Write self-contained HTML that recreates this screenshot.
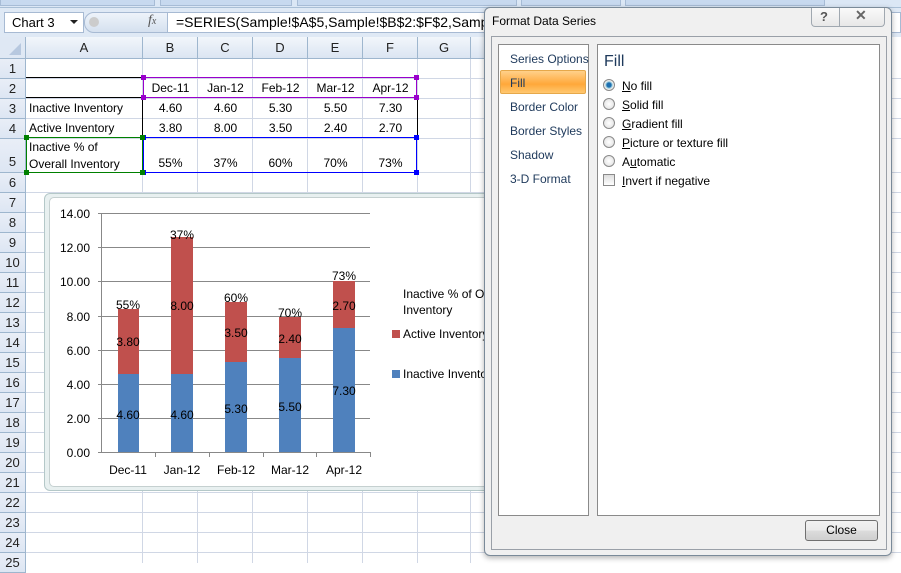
<!DOCTYPE html><html><head><style>
*{margin:0;padding:0;box-sizing:border-box}
body{width:901px;height:563px;overflow:hidden;position:relative;background:#fff;font-family:"Liberation Sans",sans-serif;font-size:12px;color:#000}
.a{position:absolute}
.hl{position:absolute;left:0;width:901px;height:1px;background:#d0d7e5}
.vl{position:absolute;top:37px;width:1px;height:526px;background:#d0d7e5}
.rh{position:absolute;left:0;width:26px;background:linear-gradient(#e9eef7,#dde6f3);border-bottom:1px solid #9eb6ce;border-right:1px solid #9eb6ce;text-align:center;font-size:13px;color:#222}
.ch{position:absolute;top:37px;height:22px;background:linear-gradient(#f2f6fb,#dbe5f2);border-right:1px solid #9eb6ce;border-bottom:1px solid #9eb6ce;text-align:center;line-height:21px;font-size:13px;color:#222}
.c{position:absolute;font-size:12px;text-align:center}
.li{position:absolute;left:12px;font-size:12px;color:#1e395b}
.opt{position:absolute;left:7px;font-size:12px;color:#000}
.rad{position:absolute;left:7px;width:12px;height:12px;border-radius:50%;border:1px solid #8a8a8a;background:radial-gradient(#fff,#ddd)}
</style></head><body>
<!-- ribbon remnant -->
<div class="a" style="left:0;top:0;width:901px;height:8px;background:#dbe7f5;border-bottom:1px solid #a9bfd6"></div>
<div class="a" style="left:0;top:0;width:155px;height:6px;background:#c7d9ef;border:1px solid #a7bcd6;border-top:0"></div>
<div class="a" style="left:160px;top:0;width:132px;height:6px;background:#c7d9ef;border:1px solid #a7bcd6;border-top:0"></div>
<div class="a" style="left:297px;top:0;width:220px;height:6px;background:#c7d9ef;border:1px solid #a7bcd6;border-top:0"></div>
<div class="a" style="left:521px;top:0;width:100px;height:6px;background:#c7d9ef;border:1px solid #a7bcd6;border-top:0"></div>
<div class="a" style="left:625px;top:0;width:200px;height:6px;background:#c7d9ef;border:1px solid #a7bcd6;border-top:0"></div>
<!-- formula bar -->
<div class="a" style="left:0;top:8px;width:901px;height:29px;background:#dfe9f5"></div>
<div class="a" style="left:4px;top:12px;width:80px;height:21px;background:#fff;border:1px solid #a7bad3;font-size:13px;line-height:19px;padding-left:7px">Chart 3</div>
<div class="a" style="left:70px;top:20px;border:4px solid transparent;border-top:4px solid #222"></div>
<div class="a" style="left:84px;top:12px;width:84px;height:21px;background:linear-gradient(#eef3fa,#d5e1ef);border:1px solid #a7bad3;border-radius:10px 0 0 10px"></div>
<div class="a" style="left:89px;top:17px;width:10px;height:10px;border-radius:50%;background:#ccc"></div>
<div class="a" style="left:148px;top:13px;font-family:'Liberation Serif',serif;font-style:italic;font-size:14px;color:#555">f<span style="font-size:10px">x</span></div>
<div class="a" style="left:167px;top:12px;width:734px;height:21px;background:#fff;border:1px solid #a7bad3;font-size:14px;line-height:19px;padding-left:8px;white-space:nowrap">=SERIES(Sample!$A$5,Sample!$B$2:$F$2,Sample!$B$5:$F$5,3)</div>
<!-- grid -->
<div class="hl" style="top:78px"></div><div class="hl" style="top:98px"></div><div class="hl" style="top:118px"></div><div class="hl" style="top:138px"></div><div class="hl" style="top:172px"></div>
<div class="hl" style="top:192px"></div><div class="hl" style="top:212px"></div><div class="hl" style="top:232px"></div><div class="hl" style="top:252px"></div><div class="hl" style="top:272px"></div><div class="hl" style="top:292px"></div><div class="hl" style="top:312px"></div><div class="hl" style="top:332px"></div><div class="hl" style="top:352px"></div><div class="hl" style="top:372px"></div><div class="hl" style="top:392px"></div><div class="hl" style="top:412px"></div><div class="hl" style="top:432px"></div><div class="hl" style="top:452px"></div><div class="hl" style="top:472px"></div><div class="hl" style="top:492px"></div><div class="hl" style="top:512px"></div><div class="hl" style="top:532px"></div><div class="hl" style="top:552px"></div>
<div class="vl" style="left:142px"></div><div class="vl" style="left:197px"></div><div class="vl" style="left:252px"></div><div class="vl" style="left:307px"></div><div class="vl" style="left:362px"></div><div class="vl" style="left:417px"></div><div class="vl" style="left:470px"></div>
<!-- headers -->
<div class="a" style="left:0;top:37px;width:26px;height:22px;background:#dfe8f4;border-right:1px solid #9eb6ce;border-bottom:1px solid #9eb6ce"></div>
<div class="a" style="left:9px;top:43px;border-left:12px solid transparent;border-bottom:12px solid #b7c8df"></div>
<div class="ch" style="left:26px;width:117px">A</div><div class="ch" style="left:143px;width:55px">B</div><div class="ch" style="left:198px;width:55px">C</div><div class="ch" style="left:253px;width:55px">D</div><div class="ch" style="left:308px;width:55px">E</div><div class="ch" style="left:363px;width:55px">F</div><div class="ch" style="left:418px;width:53px">G</div><div class="ch" style="left:471px;width:40px">H</div>
<div class="rh" style="top:59px;height:20px;line-height:19px">1</div><div class="rh" style="top:79px;height:20px;line-height:19px">2</div><div class="rh" style="top:99px;height:20px;line-height:19px">3</div><div class="rh" style="top:119px;height:20px;line-height:19px">4</div><div class="rh" style="top:139px;height:34px;line-height:46px">5</div>
<div class="rh" style="top:173px;height:20px;line-height:19px">6</div><div class="rh" style="top:193px;height:20px;line-height:19px">7</div><div class="rh" style="top:213px;height:20px;line-height:19px">8</div><div class="rh" style="top:233px;height:20px;line-height:19px">9</div><div class="rh" style="top:253px;height:20px;line-height:19px">10</div><div class="rh" style="top:273px;height:20px;line-height:19px">11</div><div class="rh" style="top:293px;height:20px;line-height:19px">12</div><div class="rh" style="top:313px;height:20px;line-height:19px">13</div><div class="rh" style="top:333px;height:20px;line-height:19px">14</div><div class="rh" style="top:353px;height:20px;line-height:19px">15</div><div class="rh" style="top:373px;height:20px;line-height:19px">16</div><div class="rh" style="top:393px;height:20px;line-height:19px">17</div><div class="rh" style="top:413px;height:20px;line-height:19px">18</div><div class="rh" style="top:433px;height:20px;line-height:19px">19</div><div class="rh" style="top:453px;height:20px;line-height:19px">20</div><div class="rh" style="top:473px;height:20px;line-height:19px">21</div><div class="rh" style="top:493px;height:20px;line-height:19px">22</div><div class="rh" style="top:513px;height:20px;line-height:19px">23</div><div class="rh" style="top:533px;height:20px;line-height:19px">24</div><div class="rh" style="top:553px;height:20px;line-height:19px">25</div>
<!-- table borders -->
<div class="a" style="left:26px;top:77px;width:117px;height:1px;background:#000"></div>
<div class="a" style="left:26px;top:97px;width:117px;height:1px;background:#000"></div>
<div class="a" style="left:142px;top:97px;width:1px;height:41px;background:#000"></div>
<div class="a" style="left:417px;top:97px;width:1px;height:41px;background:#000"></div>
<div class="a" style="left:143px;top:77px;width:274px;height:21px;border:1px solid #9900cc"></div>
<div class="a" style="left:143px;top:137px;width:274px;height:36px;border:1px solid #0000ff"></div>
<div class="a" style="left:26px;top:137px;width:117px;height:36px;border:1px solid #008000"></div>
<div class="a" style="left:141px;top:75px;width:5px;height:5px;background:#9900cc"></div><div class="a" style="left:414px;top:75px;width:5px;height:5px;background:#9900cc"></div><div class="a" style="left:141px;top:95px;width:5px;height:5px;background:#9900cc"></div><div class="a" style="left:414px;top:95px;width:5px;height:5px;background:#9900cc"></div>
<div class="a" style="left:141px;top:135px;width:5px;height:5px;background:#0000ff"></div><div class="a" style="left:414px;top:135px;width:5px;height:5px;background:#0000ff"></div><div class="a" style="left:414px;top:170px;width:5px;height:5px;background:#0000ff"></div><div class="a" style="left:141px;top:170px;width:5px;height:5px;background:#0000ff"></div>
<div class="a" style="left:24px;top:135px;width:5px;height:5px;background:#008000"></div><div class="a" style="left:24px;top:170px;width:5px;height:5px;background:#008000"></div><div class="a" style="left:140px;top:135px;width:5px;height:5px;background:#008000"></div><div class="a" style="left:140px;top:170px;width:5px;height:5px;background:#008000"></div>
<!-- cell text -->
<div class="c" style="left:143px;top:81px;width:55px">Dec-11</div><div class="c" style="left:198px;top:81px;width:55px">Jan-12</div><div class="c" style="left:253px;top:81px;width:55px">Feb-12</div><div class="c" style="left:308px;top:81px;width:55px">Mar-12</div><div class="c" style="left:363px;top:81px;width:55px">Apr-12</div>
<div class="c" style="left:29px;top:101px;text-align:left">Inactive Inventory</div>
<div class="c" style="left:143px;top:101px;width:55px">4.60</div><div class="c" style="left:198px;top:101px;width:55px">4.60</div><div class="c" style="left:253px;top:101px;width:55px">5.30</div><div class="c" style="left:308px;top:101px;width:55px">5.50</div><div class="c" style="left:363px;top:101px;width:55px">7.30</div>
<div class="c" style="left:29px;top:121px;text-align:left">Active Inventory</div>
<div class="c" style="left:143px;top:121px;width:55px">3.80</div><div class="c" style="left:198px;top:121px;width:55px">8.00</div><div class="c" style="left:253px;top:121px;width:55px">3.50</div><div class="c" style="left:308px;top:121px;width:55px">2.40</div><div class="c" style="left:363px;top:121px;width:55px">2.70</div>
<div class="c" style="left:29px;top:139px;text-align:left;line-height:17px">Inactive % of<br>Overall Inventory</div>
<div class="c" style="left:143px;top:156px;width:55px">55%</div><div class="c" style="left:198px;top:156px;width:55px">37%</div><div class="c" style="left:253px;top:156px;width:55px">60%</div><div class="c" style="left:308px;top:156px;width:55px">70%</div><div class="c" style="left:363px;top:156px;width:55px">73%</div>
<!-- chart -->
<div class="a" style="left:44px;top:193px;width:460px;height:298px;border:1px solid #b4c8c8;border-radius:6px;background:#e8f0f0"></div>
<div class="a" style="left:49px;top:197px;width:450px;height:290px;border:1px solid #c5d0d0;border-radius:5px;background:#fff"></div>
<svg class="a" style="left:0;top:0" width="901" height="563" font-family="Liberation Sans" font-size="12">
<g stroke="#888" stroke-width="1">
<line x1="98" y1="213.5" x2="370" y2="213.5"/><line x1="98" y1="247.5" x2="370" y2="247.5"/><line x1="98" y1="281.5" x2="370" y2="281.5"/><line x1="98" y1="316.5" x2="370" y2="316.5"/><line x1="98" y1="350.5" x2="370" y2="350.5"/><line x1="98" y1="384.5" x2="370" y2="384.5"/><line x1="98" y1="418.5" x2="370" y2="418.5"/><line x1="98" y1="452.5" x2="370" y2="452.5"/>
<line x1="101.5" y1="213" x2="101.5" y2="453"/>
<line x1="155.5" y1="452" x2="155.5" y2="457"/><line x1="209.5" y1="452" x2="209.5" y2="457"/><line x1="263.5" y1="452" x2="263.5" y2="457"/><line x1="316.5" y1="452" x2="316.5" y2="457"/><line x1="370.5" y1="452" x2="370.5" y2="457"/>
</g>
<g fill="#4f81bd"><rect x="118" y="374" width="21" height="78"/><rect x="171" y="374" width="22" height="78"/><rect x="225" y="362" width="22" height="90"/><rect x="279" y="358" width="22" height="94"/><rect x="333" y="328" width="22" height="124"/></g>
<g fill="#c0504d"><rect x="118" y="309" width="21" height="65"/><rect x="171" y="237" width="22" height="137"/><rect x="225" y="302" width="22" height="60"/><rect x="279" y="317" width="22" height="41"/><rect x="333" y="281" width="22" height="47"/></g>
<g text-anchor="end" font-size="12"><text x="90" y="218">14.00</text><text x="90" y="252">12.00</text><text x="90" y="286">10.00</text><text x="90" y="321">8.00</text><text x="90" y="355">6.00</text><text x="90" y="389">4.00</text><text x="90" y="423">2.00</text><text x="90" y="457">0.00</text></g>
<g text-anchor="middle"><text x="128" y="474">Dec-11</text><text x="182" y="474">Jan-12</text><text x="236" y="474">Feb-12</text><text x="290" y="474">Mar-12</text><text x="344" y="474">Apr-12</text>
<text x="128" y="419">4.60</text><text x="182" y="419">4.60</text><text x="236" y="413">5.30</text><text x="290" y="411">5.50</text><text x="344" y="395">7.30</text>
<text x="128" y="346">3.80</text><text x="182" y="310">8.00</text><text x="236" y="337">3.50</text><text x="290" y="343">2.40</text><text x="344" y="310">2.70</text>
<text x="128" y="309">55%</text><text x="182" y="239">37%</text><text x="236" y="302">60%</text><text x="290" y="317">70%</text><text x="344" y="280">73%</text></g>
<text x="403" y="298">Inactive % of Overall</text><text x="403" y="314">Inventory</text>
<rect x="392" y="330" width="8" height="8" fill="#c0504d"/><text x="403" y="338">Active Inventory</text>
<rect x="392" y="370" width="8" height="8" fill="#4f81bd"/><text x="403" y="378">Inactive Inventory</text>
</svg>
<!-- dialog -->
<div class="a" style="left:484px;top:7px;width:408px;height:549px;background:#f0f0f0;border:1px solid #7a8a99;border-radius:6px;box-shadow:0 2px 6px rgba(0,0,0,.3)"></div>
<div class="a" style="left:492px;top:14px;font-size:12px">Format Data Series</div>
<div class="a" style="left:811px;top:8px;width:74px;height:19px;border:1px solid #a0a8b0;border-top:0;border-radius:0 0 4px 4px;background:linear-gradient(#fafafa,#e8e8e8)"></div>
<div class="a" style="left:839px;top:8px;width:1px;height:19px;background:#a0a8b0"></div>
<div class="a" style="left:820px;top:9px;font-size:13px;font-weight:bold;color:#555">?</div>
<div class="a" style="left:855px;top:7px;font-size:14px;font-weight:bold;color:#666">✕</div>
<div class="a" style="left:491px;top:36px;width:396px;height:514px;border:1px solid #9aa0a8"></div>
<div class="a" style="left:498px;top:44px;width:91px;height:472px;background:#fff;border:1px solid #8a8a8a"></div>
<div class="a" style="left:597px;top:44px;width:283px;height:472px;background:#fff;border:1px solid #8a8a8a"></div>
<div class="a" style="left:500px;top:70px;width:86px;height:24px;border:1px solid #e6a84a;border-radius:2px;background:linear-gradient(#ffd08a,#ffa83a 60%,#ffc870)"></div>
<div class="li" style="left:510px;top:52px">Series Options</div>
<div class="li" style="left:510px;top:76px">Fill</div>
<div class="li" style="left:510px;top:100px">Border Color</div>
<div class="li" style="left:510px;top:124px">Border Styles</div>
<div class="li" style="left:510px;top:148px">Shadow</div>
<div class="li" style="left:510px;top:172px">3-D Format</div>
<div class="a" style="left:604px;top:53px;font-size:16px;color:#1e395b">Fill</div>
<div class="rad" style="left:603px;top:79px;background:radial-gradient(#1e6fb0 30%,#9cd 45%,#eee 60%)"></div>
<div class="rad" style="left:603px;top:98px"></div>
<div class="rad" style="left:603px;top:117px"></div>
<div class="rad" style="left:603px;top:136px"></div>
<div class="rad" style="left:603px;top:155px"></div>
<div class="a" style="left:603px;top:174px;width:12px;height:12px;border:1px solid #8a8a8a;background:linear-gradient(#ddd,#fff)"></div>
<div class="a" style="left:622px;top:79px"><u>N</u>o fill</div>
<div class="a" style="left:622px;top:98px"><u>S</u>olid fill</div>
<div class="a" style="left:622px;top:117px"><u>G</u>radient fill</div>
<div class="a" style="left:622px;top:136px"><u>P</u>icture or texture fill</div>
<div class="a" style="left:622px;top:155px">A<u>u</u>tomatic</div>
<div class="a" style="left:622px;top:174px"><u>I</u>nvert if negative</div>
<div class="a" style="left:805px;top:520px;width:73px;height:21px;border:1px solid #707070;border-radius:3px;background:linear-gradient(#f2f2f2,#ebebeb 50%,#dcdcdc 51%,#cfcfcf);text-align:center;line-height:19px">Close</div>
</body></html>
